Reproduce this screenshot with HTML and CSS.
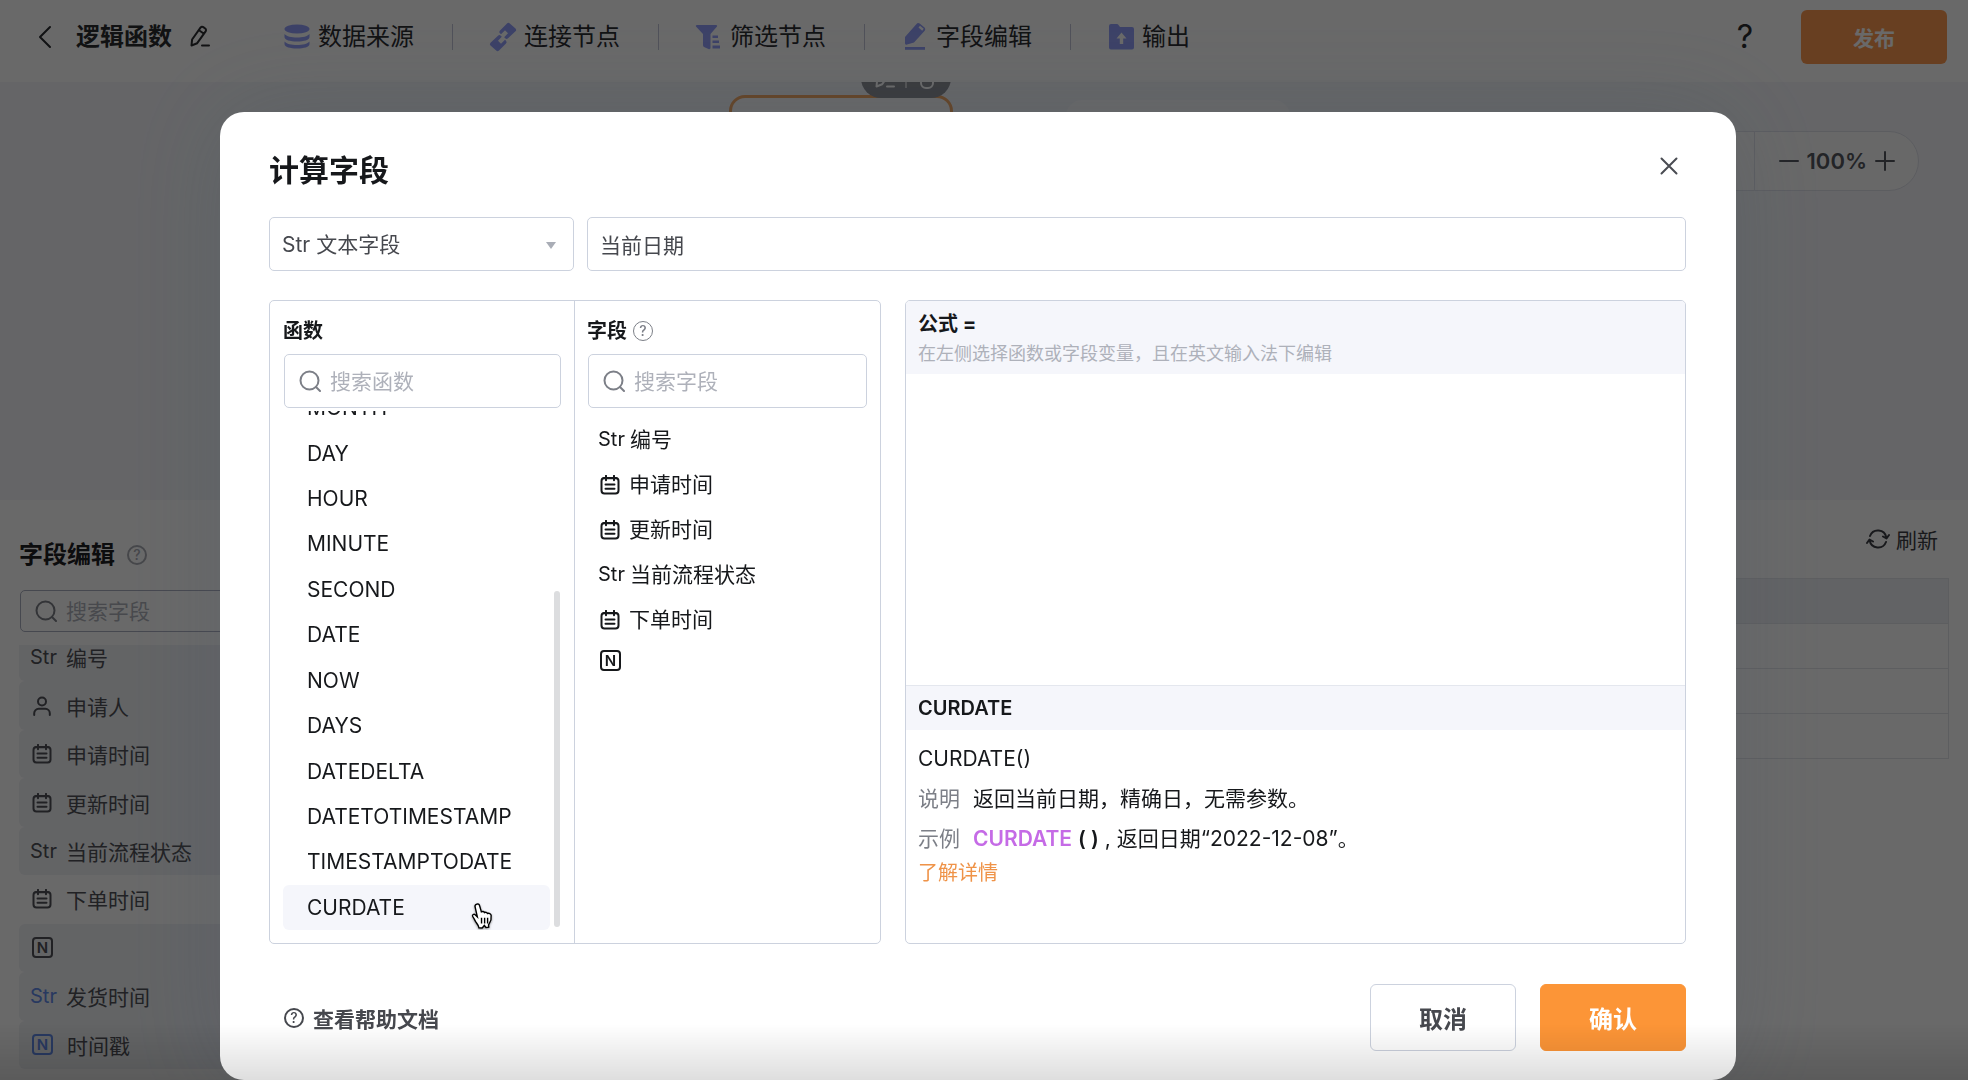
FILE: index.html
```html
<!DOCTYPE html>
<html lang="zh-CN">
<head>
    <meta charset="UTF-8">
    <meta name="viewport" content="width=device-width, initial-scale=1.0">
    <title>逻辑函数</title>
    <link rel="stylesheet" href="styles.css">
</head>
<body>
    <!-- shared icons -->
    <svg class="sprite" aria-hidden="true">
        <symbol id="icon-search" viewBox="0 0 22 22">
            <circle cx="10.5" cy="10.5" r="9"/>
            <path d="M17 17l4 4"/>
        </symbol>
        <symbol id="icon-date" viewBox="0 0 20 20">
            <rect x="1.5" y="3" width="17" height="15.5" rx="3"/>
            <path d="M6 .8v4.4M14 .8v4.4M3.5 3.2h13M5.5 9.5h9M5.5 13.8h9"/>
        </symbol>
        <symbol id="icon-user" viewBox="0 0 20 20">
            <circle cx="10" cy="5.5" r="4"/>
            <path d="M2.2 19v-1.700a4.5 4.5 0 0 1 4.5-4.5h6.6a4.5 4.5 0 0 1 4.5 4.5V19"/>
        </symbol>
        <symbol id="icon-pencil" viewBox="0 0 20 24">
            <path d="M1.500 20.500l.6-6L10.500 2.600a2 2 0 0 1 2.800-.5l1.900 1.400a2 2 0 0 1 .4 2.800L7.200 18.200zM9 5.200l4.600 3.300M12 20.500h7"/>
        </symbol>
    </svg>

    <div class="page">
        <header class="topbar">
            <button class="back" aria-label="返回">
                <svg class="line" width="14" height="24" viewBox="0 0 14 24"><path d="M12 2L2 12l10 10"/></svg>
            </button>
            <h1 class="name">逻辑函数</h1>
            <button class="rename" aria-label="重命名">
                <svg class="line" width="20" height="24"><use href="#icon-pencil"/></svg>
            </button>
            <nav class="nodes">
                <a href="#">
                    <svg width="28" height="30" viewBox="0 0 28 30">
                        <ellipse cx="14" cy="7" rx="12.500" ry="4.500"/>
                        <path d="M1.500 12c2 2.500 7 3.500 12.500 3.500s10.500-1 12.500-3.500v3c0 3-5.500 4.500-12.500 4.500S1.500 18 1.500 15z"/>
                        <path d="M1.500 19.500c2 2.500 7 3.500 12.500 3.500s10.500-1 12.500-3.500v2.500c0 3-5.500 4.500-12.500 4.500S1.500 25 1.500 22z"/>
                    </svg>
                    数据来源
                </a>
                <a href="#">
                    <svg width="28" height="30" viewBox="0 0 28 30">
                        <path d="M18 1.500a2 2 0 0 1 2.800 0l5.700 5a2 2 0 0 1 0 2.800l-7.500 7a2 2 0 0 1-2.800 0l-1-1 3.800-4-3-3-4 4-1-1a2 2 0 0 1 0-2.800z"/>
                        <path d="M10 28.500a2 2 0 0 1-2.800 0l-5.700-5a2 2 0 0 1 0-2.800l7.500-7a2 2 0 0 1 2.800 0l1 1-3.800 4 3 3 4-4 1 1a2 2 0 0 1 0 2.800z"/>
                    </svg>
                    连接节点
                </a>
                <a href="#">
                    <svg width="28" height="30" viewBox="0 0 28 30">
                        <path d="M2 3h19c1.200 0 1.500 1 .8 1.800L15.500 12v14c0 1-1 1.500-2 1L9 25c-.7-.4-1-1-1-1.800V12L1.200 4.800C.5 4 .8 3 2 3z"/>
                        <path d="M17.500 13.500H23v2.600h-5.500zM17.500 18.500H24v2.600h-6.500zM17.500 23.500H25v3h-7.500z"/>
                    </svg>
                    筛选节点
                </a>
                <a href="#">
                    <svg width="28" height="30" viewBox="0 0 28 30">
                        <path fill-rule="evenodd" d="M15.500 2c.8-1.200 2-1.400 3.200-.5l4.500 3.700c1.200 1 1.400 2.300.5 3.500L13 20.500 6 22.500c-1.200.5-2 0-2-1.200V15zM17.500 5.500l3.700 3.200 1.500-2-3.700-3z"/>
                        <path d="M4 25h20v2.800H4z"/>
                    </svg>
                    字段编辑
                </a>
                <a href="#">
                    <svg width="28" height="30" viewBox="0 0 28 30">
                        <path fill-rule="evenodd" d="M4 2h5.500c1 0 1.500.2 2 1L13 5h12a2 2 0 0 1 2 2v18.500a2 2 0 0 1-2 2H4a2 2 0 0 1-2-2V4a2 2 0 0 1 2-2zM14.500 10.500l-5 6h3.300V22h3.400v-5.500h3.300z"/>
                    </svg>
                    输出
                </a>
            </nav>
            <button class="help" aria-label="帮助">?</button>
            <button class="publish">发布</button>
        </header>

        <section class="canvas">
            <div class="node node-active">
                <div class="node-tools">
                    <svg class="line" width="20" height="24"><use href="#icon-pencil"/></svg>
                    <i></i>
                    <svg class="line" width="20" height="24" viewBox="0 0 20 24"><path d="M3 6h14M4 6v11a5 5 0 0 0 5 5h2a5 5 0 0 0 5-5V6"/></svg>
                </div>
            </div>
            <div class="node node-next"></div>
            <div class="zoom">
                <button aria-label="缩小"><svg class="line" width="20" height="20" viewBox="0 0 20 20"><path d="M1 10h18"/></svg></button>
                <span>100%</span>
                <button aria-label="放大"><svg class="line" width="20" height="20" viewBox="0 0 20 20"><path d="M1 10h18M10 1v18"/></svg></button>
            </div>
        </section>

        <section class="bottom">
            <aside class="side">
                <h2>字段编辑 <span class="tip">?</span></h2>
                <label class="search search-small">
                    <svg class="line" width="22" height="22"><use href="#icon-search"/></svg>
                    <input type="text" placeholder="搜索字段" aria-label="搜索字段">
                </label>
                <div class="side-view">
                    <ul class="side-list">
                        <li><span class="str">Str</span>编号</li>
                        <li><svg class="line" width="20" height="20"><use href="#icon-user"/></svg>申请人</li>
                        <li><svg class="line" width="20" height="20"><use href="#icon-date"/></svg>申请时间</li>
                        <li><svg class="line" width="20" height="20"><use href="#icon-date"/></svg>更新时间</li>
                        <li><span class="str">Str</span>当前流程状态</li>
                        <li class="current"><svg class="line" width="20" height="20"><use href="#icon-date"/></svg>下单时间</li>
                        <li><span class="num">N</span></li>
                        <li><span class="str blue">Str</span>发货时间</li>
                        <li><span class="num blue">N</span>时间戳</li>
                    </ul>
                </div>
            </aside>
            <div class="preview">
                <button class="refresh">
                    <svg class="line" width="24" height="22" viewBox="0 0 24 22">
                        <path d="M4 8a8.500 8.500 0 0 1 16.300 1.500M20 14A8.500 8.500 0 0 1 3.700 12.500M17 8.500l3.500 2 2.500-3.500M1 15l2.500-3.500 3.500 2"/>
                    </svg>
                    刷新
                </button>
                <table>
                    <thead><tr><th></th></tr></thead>
                    <tbody>
                        <tr><td></td></tr>
                        <tr><td></td></tr>
                        <tr><td></td></tr>
                    </tbody>
                </table>
            </div>
        </section>
    </div>

    <div class="mask">
        <div class="modal" role="dialog" aria-labelledby="modal-title">
            <div class="modal-head">
                <h2 id="modal-title">计算字段</h2>
                <button class="close" aria-label="关闭">
                    <svg class="line" width="18" height="18" viewBox="0 0 18 18"><path d="M1.500 1.500l15 15M16.500 1.500l-15 15"/></svg>
                </button>
            </div>

            <div class="basic">
                <div class="type">
                    <select aria-label="字段类型">
                        <option>Str 文本字段</option>
                    </select>
                </div>
                <input class="field-name" type="text" value="当前日期" aria-label="字段名称">
            </div>

            <div class="editor">
                <div class="picker">
                    <div class="column">
                        <h3>函数</h3>
                        <label class="search">
                            <svg class="line" width="22" height="22"><use href="#icon-search"/></svg>
                            <input type="text" placeholder="搜索函数" aria-label="搜索函数">
                        </label>
                        <div class="func-view">
                            <ul class="func-list">
                                <li><button>MONTH</button></li>
                                <li><button>DAY</button></li>
                                <li><button>HOUR</button></li>
                                <li><button>MINUTE</button></li>
                                <li><button>SECOND</button></li>
                                <li><button>DATE</button></li>
                                <li><button>NOW</button></li>
                                <li><button>DAYS</button></li>
                                <li><button>DATEDELTA</button></li>
                                <li><button>DATETOTIMESTAMP</button></li>
                                <li><button>TIMESTAMPTODATE</button></li>
                                <li>
                                    <button class="selected">CURDATE</button>
                                    <svg class="pointer" width="24" height="28" viewBox="0 0 24 30">
                                        <path d="M6.500 2.200c1.300-.4 2.500.3 2.900 1.700l1.900 6.600c1.500-.8 2.800-.3 3.300.8 1.300-.7 2.700-.2 3.200 1 1.800-.6 3.700.2 4 2 .4 3.500-.2 6-1.900 8.500l-.9 1.700.2 2.500-3 .3-1.700-2.200-2.300 2.700-3.500-.2c-.3-2.400-1.700-4-3.200-6C4.200 19.500 3.500 17.500 2 15.300c-.8-1.600 1.300-2.900 2.700-1.700l2.300 2.300L4.600 5.200c-.4-1.400.6-2.600 1.900-3z"/>
                                        <path d="M11.500 17v6M14.800 17v6M18 17v6"/>
                                    </svg>
                                </li>
                            </ul>
                            <span class="scroll-thumb"></span>
                        </div>
                    </div>
                    <div class="column">
                        <h3>字段 <span class="tip">?</span></h3>
                        <label class="search">
                            <svg class="line" width="22" height="22"><use href="#icon-search"/></svg>
                            <input type="text" placeholder="搜索字段" aria-label="搜索字段">
                        </label>
                        <ul class="field-list">
                            <li><button><span class="str">Str</span>编号</button></li>
                            <li><button><svg class="line" width="20" height="20"><use href="#icon-date"/></svg>申请时间</button></li>
                            <li><button><svg class="line" width="20" height="20"><use href="#icon-date"/></svg>更新时间</button></li>
                            <li><button><span class="str">Str</span>当前流程状态</button></li>
                            <li><button><svg class="line" width="20" height="20"><use href="#icon-date"/></svg>下单时间</button></li>
                            <li><button><span class="num">N</span></button></li>
                        </ul>
                    </div>
                </div>

                <div class="formula">
                    <div class="formula-head">
                        <label for="formula-input">公式 =</label>
                        <p>在左侧选择函数或字段变量，且在英文输入法下编辑</p>
                    </div>
                    <textarea id="formula-input"></textarea>
                    <h4>CURDATE</h4>
                    <div class="doc">
                        <p>CURDATE()</p>
                        <p><span class="key">说明</span>返回当前日期，精确日，无需参数。</p>
                        <p><span class="key">示例</span><b class="fn">CURDATE</b> <b>( )</b> , 返回日期“2022-12-08”。</p>
                        <a href="#">了解详情</a>
                    </div>
                </div>
            </div>

            <div class="modal-foot">
                <a class="docs" href="#"><span class="tip">?</span>查看帮助文档</a>
                <button class="btn">取消</button>
                <button class="btn btn-primary">确认</button>
            </div>
        </div>
    </div>
    <div class="fade"></div>
</body>
</html>
```
FILE: styles.css
```css
* {
    box-sizing: border-box;
}

body {
    margin: 0;
    font-family: Inter, "Noto Sans CJK SC", sans-serif;
    font-size: 21px;
    color: #16181b;
    overflow: hidden;
}

h1, h2, h3, h4, p, ul {
    margin: 0;
    padding: 0;
}

ul {
    list-style: none;
}

a {
    color: inherit;
    text-decoration: none;
}

button, input, select, textarea {
    font: inherit;
    color: inherit;
    border: none;
    background: none;
    padding: 0;
    outline: none;
}

button {
    cursor: pointer;
}

svg {
    flex: none;
}

.sprite {
    display: none;
}

.line {
    fill: none;
    stroke: currentColor;
    stroke-width: 2;
    stroke-linecap: round;
    stroke-linejoin: round;
}

.tip {
    display: inline-flex;
    align-items: center;
    justify-content: center;
    width: 20px;
    height: 20px;
    border: 2px solid currentColor;
    border-radius: 50%;
    font-size: 14px;
    font-weight: 500;
    line-height: 1;
}

.str {
    width: 24px;
    font-size: 20px;
}

.num {
    display: flex;
    align-items: center;
    justify-content: center;
    width: 21px;
    height: 21px;
    border: 2px solid currentColor;
    border-radius: 4px;
    font-size: 15px;
    font-weight: 600;
    line-height: 1;
}

/* page behind the dialog */
.page {
    display: flex;
    flex-direction: column;
    height: 100vh;
    color: #3c3e44;
}

.topbar {
    display: flex;
    align-items: center;
    height: 82px;
    padding: 0 21px 9px 38px;
    background: #fff;
    color: #2a2c30;
    flex: none;
}

.back {
    display: flex;
    margin-right: 24px;
}

.name {
    font-size: 24px;
    line-height: 36px;
    font-weight: 700;
}

.rename {
    display: flex;
    margin-left: 18px;
}

.nodes {
    display: flex;
    margin-left: 36px;
    font-size: 24px;
    line-height: 26px;
}

.nodes a {
    display: flex;
    align-items: center;
    gap: 7px;
    width: 206px;
    height: 26px;
    padding-left: 36px;
    border-left: 1px solid #c3c5d8;
}

.nodes a:first-child {
    border-left-color: transparent;
}

.nodes svg {
    fill: #939ffa;
}

.help {
    margin-left: auto;
    font-size: 32px;
    line-height: 40px;
}

.publish {
    width: 146px;
    height: 54px;
    margin-left: 48px;
    border-radius: 6px;
    background: #fd9a50;
    color: #fff;
    font-weight: 700;
}

.canvas {
    position: relative;
    height: 418px;
    background: #f5f6fa;
    overflow: hidden;
    flex: none;
}

.node {
    position: absolute;
    width: 224px;
    height: 96px;
    background: #fbfbfc;
    border-radius: 16px;
}

.node-active {
    left: 729px;
    top: 13px;
    border: 3px solid #f5a55c;
}

.node-next {
    left: 1066px;
    top: 18px;
}

.node-tools {
    position: absolute;
    right: -1px;
    bottom: 90px;
    display: flex;
    align-items: center;
    justify-content: center;
    gap: 10px;
    width: 90px;
    height: 40px;
    border-radius: 20px;
    background: #8a8c93;
    color: #fff;
}

.node-tools i {
    width: 2px;
    height: 20px;
    background: #c8c8cc;
}

.zoom {
    position: absolute;
    top: 49px;
    right: 49px;
    display: flex;
    align-items: center;
    justify-content: flex-end;
    gap: 8px;
    width: 260px;
    height: 60px;
    padding-right: 23px;
    border: 1px solid #dfe1ea;
    border-radius: 30px;
    background: #fdfdfd;
    color: #555860;
    font-size: 22px;
    font-weight: 600;
}

.zoom::before {
    content: "";
    height: 58px;
    margin-right: 16px;
    border-left: 1px solid #dfe1ea;
}

.zoom button {
    display: flex;
}

.bottom {
    display: flex;
    flex: 1;
    background: #fff;
}

.side {
    display: flex;
    flex-direction: column;
    width: 380px;
    padding: 36px 0 0 19px;
}

.side h2 {
    display: flex;
    align-items: center;
    gap: 12px;
    font-size: 24px;
    line-height: 38px;
    margin-bottom: 16px;
    color: #1e2024;
}

.side .tip {
    color: #aaacb4;
}

.side-view {
    display: flex;
    flex-direction: column;
    justify-content: flex-end;
    height: 424px;
    margin-top: 13px;
    overflow: hidden;
}

.side-list {
    display: grid;
    grid-template-rows: repeat(9, 1fr);
    height: 436px;
    flex: none;
}

.side-list li {
    display: flex;
    align-items: center;
    gap: 14px;
    padding-left: 13px;
    border-radius: 6px;
    background: #f0f2f6;
    color: #505258;
}

.side-list .str {
    margin-right: -2px;
    margin-left: -2px;
}

.side-list .current {
    background: #fff;
}

.side-list .blue {
    color: #628ae8;
}

.preview {
    display: flex;
    flex-direction: column;
    flex: 1;
    padding: 22px 19px 0;
}

.refresh {
    display: flex;
    align-items: center;
    gap: 6px;
    align-self: flex-end;
    height: 34px;
    margin: 0 11px 22px 0;
}

table {
    width: 100%;
    border-collapse: collapse;
}

th, td {
    height: 45px;
    padding: 0;
    border: 1px solid #e3e5ea;
}

th {
    background: #eef0f4;
}

/* dialog */
.mask {
    position: fixed;
    inset: 0;
    padding: 112px 232px 0 220px;
    background: rgba(0, 0, 0, 0.59);
}

.modal {
    padding: 36px 50px 29px 49px;
    border-radius: 24px;
    background: #fff;
    box-shadow: 0 0 100px rgba(70, 85, 100, 0.25);
}

.modal-head {
    display: flex;
    align-items: center;
    justify-content: space-between;
    padding-right: 8px;
    margin-bottom: 25px;
}

.modal-head h2 {
    font-size: 30px;
    line-height: 44px;
}

.close {
    display: flex;
    margin-bottom: 8px;
    color: #4a4c52;
}

.basic {
    display: flex;
    gap: 13px;
    margin-bottom: 29px;
    color: #46484e;
}

.type {
    position: relative;
    width: 305px;
}

.type::after {
    content: "";
    position: absolute;
    right: 18px;
    top: 25px;
    border: 5px solid transparent;
    border-top: 7px solid #a9adb6;
    border-bottom: none;
}

.type select, .field-name {
    width: 100%;
    height: 54px;
    padding: 0 12px;
    border: 1px solid #ccd2de;
    border-radius: 5px;
    background: #fff;
    appearance: none;
}

.field-name {
    flex: 1;
}

.editor {
    display: flex;
    gap: 24px;
}

.picker {
    display: flex;
    width: 612px;
    border: 1px solid #ccd2de;
    border-radius: 5px;
}

.column {
    display: flex;
    flex-direction: column;
    width: 304px;
    padding: 13px 13px 12px;
}

.column + .column {
    flex: 1;
    padding-left: 12px;
    border-left: 1px solid #ccd2de;
}

.column h3 {
    display: flex;
    align-items: center;
    gap: 6px;
    font-size: 20px;
    line-height: 34px;
    margin-bottom: 6px;
}

.column .tip {
    color: #7c7f87;
    border-width: 1px;
}

.search {
    display: flex;
    align-items: center;
    gap: 9px;
    height: 54px;
    margin-left: 1px;
    padding: 0 14px;
    border: 1px solid #ccd2de;
    border-radius: 5px;
    color: #7c7f87;
    flex: none;
}

.search input {
    flex: 1;
    min-width: 0;
}

.search input::placeholder {
    color: #aeb1ba;
}

.search-small {
    height: 42px;
    border-color: #aaaec0;
}

.func-view {
    position: relative;
    display: flex;
    flex-direction: column;
    justify-content: flex-end;
    height: 519px;
    margin-top: 3px;
    margin-bottom: 1px;
    overflow: hidden;
}

.func-list {
    display: grid;
    grid-template-rows: repeat(12, 1fr);
    height: 545px;
    margin-right: 11px;
    flex: none;
}

.func-list li {
    position: relative;
    display: flex;
}

.func-list button {
    flex: 1;
    padding-left: 24px;
    border-radius: 6px;
    text-align: left;
}

.func-list .selected {
    background: #f5f6fb;
}

.pointer {
    position: absolute;
    right: 56px;
    top: 17px;
    fill: #fff;
    stroke: #000;
    stroke-width: 1.5;
    filter: drop-shadow(0 1px 1px rgba(0, 0, 0, 0.4));
}

.scroll-thumb {
    position: absolute;
    right: 1px;
    bottom: 3px;
    width: 6px;
    height: 336px;
    border-radius: 3px;
    background: #dcdddf;
}

.field-list {
    padding-top: 9px;
}

.field-list button {
    display: flex;
    align-items: center;
    gap: 9px;
    padding: 8px 13px;
    line-height: 29px;
}

.field-list .str {
    margin-left: -2px;
    width: 23px;
}

.formula {
    display: flex;
    flex-direction: column;
    flex: 1;
    border: 1px solid #ccd2de;
    border-radius: 5px;
    overflow: hidden;
}

.formula-head {
    height: 73px;
    padding: 8px 12px;
    background: #f5f6fb;
}

.formula-head label {
    display: block;
    font-size: 20px;
    font-weight: 700;
    line-height: 30px;
}

.formula-head p {
    font-size: 18px;
    line-height: 30px;
    color: #aeb1ba;
}

.formula textarea {
    flex: 1;
    padding: 12px;
    resize: none;
}

.formula h4 {
    padding: 0 12px;
    border-top: 1px solid #e4e7ee;
    background: #f5f6fb;
    font-size: 20px;
    font-weight: 600;
    line-height: 44px;
}

.doc {
    height: 213px;
    padding: 9px 12px;
}

.doc p {
    line-height: 40px;
}

.doc .key {
    margin-right: 13px;
    color: #7c7f87;
}

.doc .fn {
    color: #c56be6;
}

.doc b {
    font-weight: 600;
}

.doc a {
    font-size: 20px;
    line-height: 28px;
    color: #ef9348;
}

.modal-foot {
    display: flex;
    align-items: center;
    gap: 24px;
    margin-top: 40px;
}

.docs {
    display: flex;
    align-items: center;
    gap: 9px;
    margin: 0 auto 0 15px;
    font-weight: 700;
    color: #46484e;
}

.btn {
    width: 146px;
    height: 67px;
    border: 1px solid #ccd2de;
    border-radius: 6px;
    font-size: 24px;
    font-weight: 700;
    color: #46484e;
}

.btn-primary {
    border-color: #fc9537;
    background: #fc9537;
    color: #fff;
}

/* shade along the bottom edge of the window */
.fade {
    position: fixed;
    left: 0;
    right: 0;
    bottom: 0;
    height: 56px;
    background: linear-gradient(rgba(0, 0, 0, 0), rgba(0, 0, 0, 0.13));
    pointer-events: none;
}
```
